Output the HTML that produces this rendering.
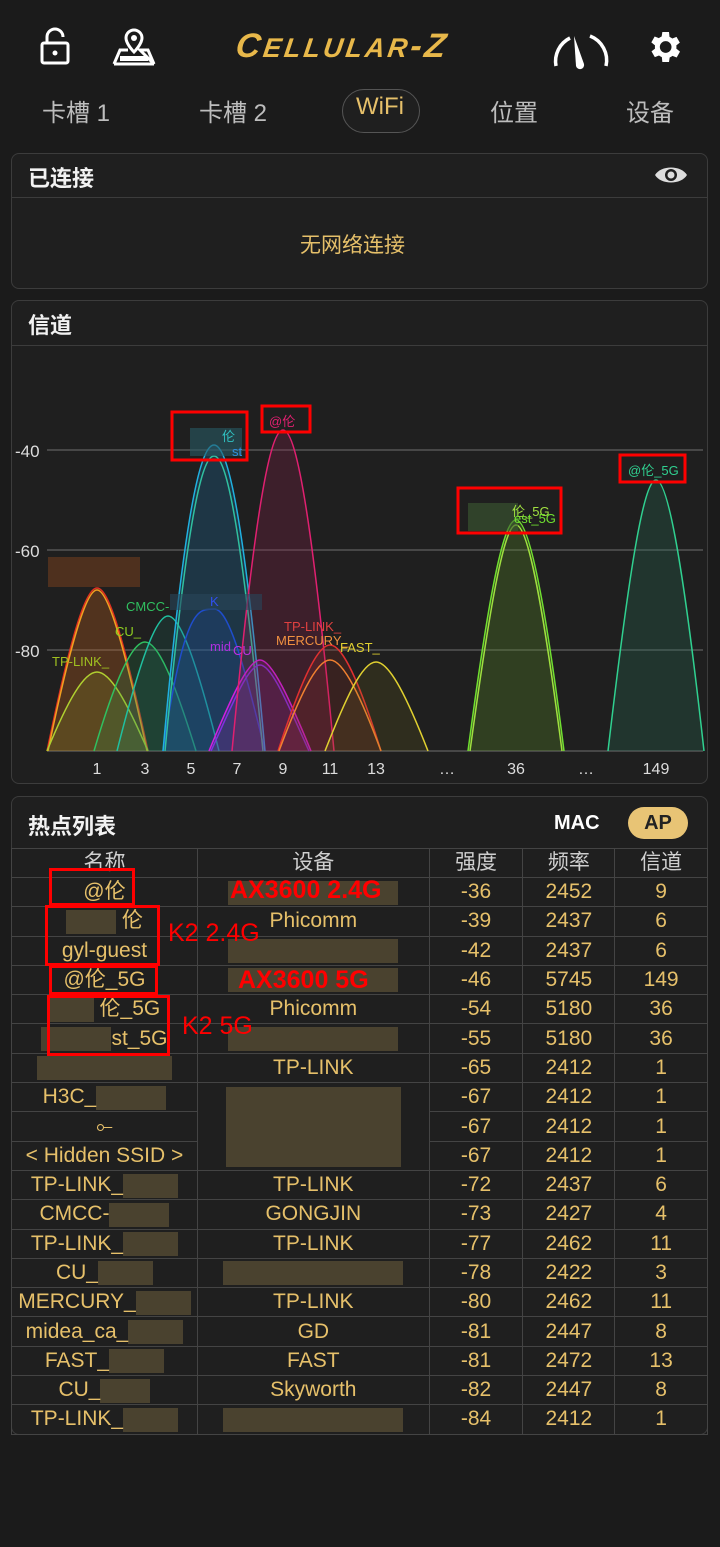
<!DOCTYPE html>
<html><head><meta charset="utf-8">
<style>
*{margin:0;padding:0;box-sizing:border-box}
body{width:720px;height:1547px;background:#1b1b1b;position:relative;overflow:hidden;font-family:"Liberation Sans","Noto Sans CJK SC",sans-serif;color:#ddd}
.abs{position:absolute}
.panel{position:absolute;left:11px;width:697px;background:#1f1f1f;border:1px solid #3c3c3c;border-radius:8px}
.title{position:absolute;left:16px;font-size:22px;font-weight:bold;color:#f2f2f2}
.tab{position:absolute;top:93px;font-size:24px;color:#bdbdbd;font-family:"Liberation Sans","Noto Sans CJK SC",sans-serif}
.gold{color:#e6c06a}
table{position:absolute;left:11px;top:848px;border-collapse:collapse;width:697px;font-family:"Liberation Sans Narrow","Liberation Sans","Noto Sans CJK SC",sans-serif;font-size:21px;color:#e6c06a}
td,th{border:1px solid #444;height:29.3px;text-align:center;padding:0;line-height:26px;white-space:nowrap}
th{font-weight:normal;color:#cfcfcf;height:29px;font-family:"Liberation Sans","Noto Sans CJK SC",sans-serif;font-size:21px}
.bl{display:inline-block;background:rgba(110,95,60,.55);height:24px;vertical-align:middle}
.red{position:absolute;border:3px solid #f00}
.rt{position:absolute;color:#f00;font-size:25px;font-family:"Liberation Sans",sans-serif;font-weight:bold}
</style></head><body>
<svg class="abs" style="left:38px;top:26px" width="34" height="40" viewBox="0 0 34 40"><path d="M9 17V11a8 8 0 0 1 16 0" fill="none" stroke="#fff" stroke-width="3"/><rect x="4" y="17" width="26" height="20" rx="2" fill="none" stroke="#fff" stroke-width="3"/><circle cx="17" cy="27" r="2.5" fill="#fff"/></svg>
<svg class="abs" style="left:110px;top:26px" width="48" height="40" viewBox="0 0 48 40"><path d="M24 4a8 8 0 0 1 8 8c0 6-8 14-8 14s-8-8-8-14a8 8 0 0 1 8-8z" fill="none" stroke="#fff" stroke-width="3"/><circle cx="24" cy="12" r="3" fill="#fff"/><path d="M4 38l6-14h8M30 24h8l6 14z" fill="none" stroke="#fff" stroke-width="3"/><path d="M4 38h40" stroke="#fff" stroke-width="3"/><rect x="10" y="30" width="28" height="5" fill="#fff"/></svg>
<div class="abs" style="left:236px;top:27px;font-size:34px;font-weight:bold;font-style:italic;color:#e8b84a;letter-spacing:3px;font-family:'Liberation Sans',sans-serif;transform:skewX(-8deg)">C<span style="font-size:27px">ELLULAR</span>-Z</div>
<svg class="abs" style="left:552px;top:30px" width="58" height="40" viewBox="0 0 58 40"><path d="M4 36a26 26 0 0 1 14-28M38 6a26 26 0 0 1 16 30" fill="none" stroke="#fff" stroke-width="3.5"/><path d="M22 6l10 28a4 4 0 0 1-8 2z" fill="#fff"/></svg>
<svg class="abs" style="left:644px;top:27px" width="40" height="40" viewBox="0 0 24 24"><path fill="#fff" d="M19.4 13a7.5 7.5 0 0 0 0-2l2.1-1.6-2-3.5-2.5 1a7 7 0 0 0-1.7-1L15 3h-4l-.4 2.7a7 7 0 0 0-1.7 1l-2.5-1-2 3.5L6.6 11a7.5 7.5 0 0 0 0 2l-2.1 1.6 2 3.5 2.5-1a7 7 0 0 0 1.7 1L11 21h4l.4-2.7a7 7 0 0 0 1.7-1l2.5 1 2-3.5zM13 15.5a3.5 3.5 0 1 1 0-7 3.5 3.5 0 0 1 0 7z"/></svg>
<div class="tab" style="left:42px">卡槽 1</div>
<div class="tab" style="left:199px">卡槽 2</div>
<div class="abs" style="left:342px;top:89px;width:78px;height:44px;border:1px solid #555;border-radius:22px;background:#1f1f1f"></div>
<div class="tab gold" style="left:356px;color:#e6c06a">WiFi</div>
<div class="tab" style="left:490px">位置</div>
<div class="tab" style="left:626px">设备</div>
<div class="panel" style="top:153px;height:136px">
 <div class="title" style="top:7px">已连接</div>
 <svg class="abs" style="left:641px;top:8px" width="36" height="26" viewBox="0 0 36 26"><path d="M2 13C8 3 28 3 34 13 28 23 8 23 2 13z" fill="#ddd"/><circle cx="18" cy="13" r="6" fill="#1f1f1f"/><circle cx="18" cy="13" r="3.5" fill="#ddd"/></svg>
 <div class="abs" style="left:0;top:43px;width:695px;height:1px;background:#3c3c3c"></div>
 <div class="abs gold" style="left:288px;top:75px;font-size:21px">无网络连接</div>
</div>
<div class="panel" style="top:300px;height:484px">
 <div class="title" style="top:7px">信道</div>
 <div class="abs" style="left:0;top:44px;width:695px;height:1px;background:#3c3c3c"></div>
</div>
<svg class="abs" style="left:0;top:300px" width="720" height="484" viewBox="0 300 720 484">
 <g stroke="#555" stroke-width="1.5"><line x1="47" y1="450" x2="703" y2="450"/><line x1="47" y1="550" x2="703" y2="550"/><line x1="47" y1="650" x2="703" y2="650"/><line x1="47" y1="751" x2="703" y2="751"/></g>
 <g font-family="Liberation Sans Narrow,Liberation Sans,sans-serif" font-size="17" fill="#ddd"><text x="15" y="457">-40</text><text x="15" y="557">-60</text><text x="15" y="657">-80</text></g>
 <g font-family="Liberation Sans,sans-serif" font-size="16" fill="#ddd" text-anchor="middle"><text x="97" y="774">1</text><text x="145" y="774">3</text><text x="191" y="774">5</text><text x="237" y="774">7</text><text x="283" y="774">9</text><text x="330" y="774">11</text><text x="376" y="774">13</text><text x="447" y="774">…</text><text x="516" y="774">36</text><text x="586" y="774">…</text><text x="656" y="774">149</text></g>
 <g stroke-width="1.5">
  <path d="M47 751C70 640 85 588 97 588S124 640 148 751" stroke="#e03020" fill="rgba(200,100,30,.3)"/>
  <path d="M48 751C70 645 86 590 97 590S124 645 147 751" stroke="#f0a020" fill="none"/>
  <path d="M47 751C68 700 84 672 97 672S126 700 148 751" stroke="#b0d030" fill="rgba(140,160,40,.2)"/>
  <path d="M94 751C115 680 132 642 145 642S174 680 196 751" stroke="#30c060" fill="rgba(40,150,80,.2)"/>
  <path d="M117 751C140 660 156 616 168 616S196 660 219 751" stroke="#20c0a0" fill="rgba(30,140,120,.15)"/>
  <path d="M163 751C185 600 200 610 214 609S243 660 265 751" stroke="#2040e0" fill="rgba(30,60,160,.25)"/>
  <path d="M163 751C182 540 198 445 214 445S246 540 265 751" stroke="#20b0e0" fill="rgba(30,110,160,.3)"/>
  <path d="M165 751C185 540 200 456 214 456S242 540 263 751" stroke="#30c0a0" fill="none"/>
  <path d="M209 751C230 700 248 660 260 660S290 700 311 751" stroke="#d020e0" fill="rgba(150,40,170,.25)"/>
  <path d="M211 751C232 705 248 665 260 665S288 705 309 751" stroke="#8030e0" fill="none"/>
  <path d="M232 751C252 540 268 430 283 430S314 540 334 751" stroke="#e02070" fill="rgba(150,30,80,.25)"/>
  <path d="M278 751C298 690 316 645 330 645S362 690 381 751" stroke="#e03030" fill="rgba(160,50,40,.2)"/>
  <path d="M279 751C298 700 316 660 330 660S362 700 381 751" stroke="#f08030" fill="none"/>
  <path d="M325 751C345 700 362 662 376 662S408 700 428 751" stroke="#e0d030" fill="rgba(140,130,30,.15)"/>
  <path d="M468 751C488 600 503 520 516 520S545 600 564 751" stroke="#70e030" fill="rgba(90,140,40,.3)"/>
  <path d="M470 751C490 605 504 525 516 525S543 605 562 751" stroke="#a0e040" fill="none"/>
  <path d="M608 751C628 580 643 480 656 480S685 580 704 751" stroke="#30d090" fill="rgba(40,120,90,.25)"/>
 </g>
 <rect x="48" y="557" width="92" height="30" fill="rgba(110,60,30,.6)"/>
 <rect x="170" y="594" width="92" height="16" fill="rgba(40,70,90,.6)"/>
 <rect x="190" y="428" width="52" height="28" fill="rgba(40,90,100,.6)"/>
 <rect x="468" y="503" width="50" height="28" fill="rgba(60,90,50,.6)"/>
 <g font-family="Liberation Sans Narrow,Liberation Sans,Noto Sans CJK SC,sans-serif" font-size="13">
  <text x="126" y="611" fill="#30c060">CMCC-</text><text x="210" y="606" fill="#3050f0">K</text>
  <text x="115" y="636" fill="#90d020">CU_</text><text x="52" y="666" fill="#a0c020">TP-LINK_</text>
  <text x="284" y="631" fill="#e04040">TP-LINK_</text><text x="276" y="645" fill="#f09040">MERCURY_</text>
  <text x="340" y="652" fill="#e0d030">FAST_</text><text x="210" y="651" fill="#b030e0">mid</text><text x="233" y="655" fill="#c030e0">CU</text>
  <text x="222" y="441" fill="#30c0c0">伦</text><text x="232" y="456" fill="#3090e0">st</text>
  <text x="269" y="426" fill="#e02070">@伦</text>
  <text x="512" y="516" fill="#a0e040">伦_5G</text><text x="514" y="523" fill="#70e030">est_5G</text>
  <text x="628" y="475" fill="#30d090">@伦_5G</text>
 </g>
 <g fill="none" stroke="#f00" stroke-width="3">
  <rect x="172" y="412" width="75" height="48"/><rect x="262" y="406" width="48" height="26"/>
  <rect x="458" y="488" width="103" height="45"/><rect x="620" y="455" width="65" height="27"/>
 </g>
</svg>
<div class="panel" style="top:796px;height:639px">
 <div class="title" style="top:12px">热点列表</div>
 <div class="abs" style="left:542px;top:15px;font-size:20px;font-weight:bold;color:#fff">MAC</div>
 <div class="abs" style="left:616px;top:10px;width:60px;height:32px;border-radius:16px;background:#e8c475;color:#222;font-weight:bold;font-size:20px;text-align:center;line-height:32px">AP</div>
</div>
<table>
<colgroup><col style="width:186px"><col style="width:232px"><col style="width:94px"><col style="width:92px"><col style="width:93px"></colgroup>
<tr><th>名称</th><th>设备</th><th>强度</th><th>频率</th><th>信道</th></tr>
<tr><td>@伦</td><td><span class="bl" style="width:170px"></span></td><td>-36</td><td>2452</td><td>9</td></tr>
<tr><td><span class="bl" style="width:50px"></span> 伦</td><td>Phicomm</td><td>-39</td><td>2437</td><td>6</td></tr>
<tr><td>gyl-guest</td><td><span class="bl" style="width:170px"></span></td><td>-42</td><td>2437</td><td>6</td></tr>
<tr><td>@伦_5G</td><td><span class="bl" style="width:170px"></span></td><td>-46</td><td>5745</td><td>149</td></tr>
<tr><td><span class="bl" style="width:45px"></span> 伦_5G</td><td>Phicomm</td><td>-54</td><td>5180</td><td>36</td></tr>
<tr><td><span class="bl" style="width:70px"></span>st_5G</td><td><span class="bl" style="width:170px"></span></td><td>-55</td><td>5180</td><td>36</td></tr>
<tr><td><span class="bl" style="width:135px"></span></td><td>TP-LINK</td><td>-65</td><td>2412</td><td>1</td></tr>
<tr><td>H3C_<span class="bl" style="width:70px"></span></td><td rowspan="3"><span class="bl" style="width:175px;height:80px"></span></td><td>-67</td><td>2412</td><td>1</td></tr>
<tr><td>⟜</td><td>-67</td><td>2412</td><td>1</td></tr>
<tr><td>&lt; Hidden SSID &gt;</td><td>-67</td><td>2412</td><td>1</td></tr>
<tr><td>TP-LINK_<span class="bl" style="width:55px"></span></td><td>TP-LINK</td><td>-72</td><td>2437</td><td>6</td></tr>
<tr><td>CMCC-<span class="bl" style="width:60px"></span></td><td>GONGJIN</td><td>-73</td><td>2427</td><td>4</td></tr>
<tr><td>TP-LINK_<span class="bl" style="width:55px"></span></td><td>TP-LINK</td><td>-77</td><td>2462</td><td>11</td></tr>
<tr><td>CU_<span class="bl" style="width:55px"></span></td><td><span class="bl" style="width:180px"></span></td><td>-78</td><td>2422</td><td>3</td></tr>
<tr><td>MERCURY_<span class="bl" style="width:55px"></span></td><td>TP-LINK</td><td>-80</td><td>2462</td><td>11</td></tr>
<tr><td>midea_ca_<span class="bl" style="width:55px"></span></td><td>GD</td><td>-81</td><td>2447</td><td>8</td></tr>
<tr><td>FAST_<span class="bl" style="width:55px"></span></td><td>FAST</td><td>-81</td><td>2472</td><td>13</td></tr>
<tr><td>CU_<span class="bl" style="width:50px"></span></td><td>Skyworth</td><td>-82</td><td>2447</td><td>8</td></tr>
<tr><td>TP-LINK_<span class="bl" style="width:55px"></span></td><td><span class="bl" style="width:180px"></span></td><td>-84</td><td>2412</td><td>1</td></tr>
</table>
<div class="red" style="left:49px;top:868px;width:86px;height:38px"></div>
<div class="red" style="left:45px;top:905px;width:115px;height:61px"></div>
<div class="red" style="left:49px;top:965px;width:109px;height:30px"></div>
<div class="red" style="left:47px;top:995px;width:123px;height:61px"></div>
<div class="rt" style="left:230px;top:876px">AX3600 2.4G</div>
<div class="rt" style="left:168px;top:919px;font-weight:normal">K2 2.4G</div>
<div class="rt" style="left:238px;top:966px">AX3600 5G</div>
<div class="rt" style="left:182px;top:1012px;font-weight:normal">K2 5G</div>
</body></html>
